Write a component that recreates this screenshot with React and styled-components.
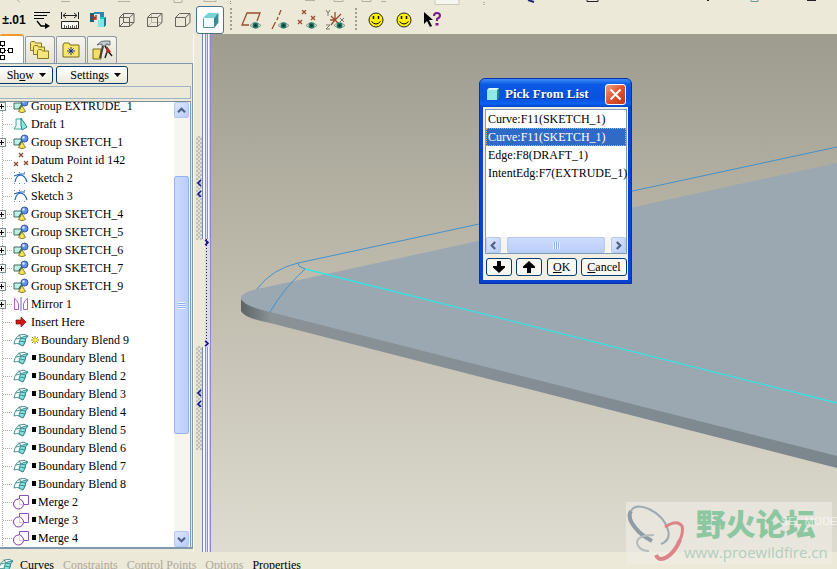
import React, { useState } from 'react'
import styled, { createGlobalStyle } from 'styled-components'

const GlobalStyle = createGlobalStyle`
* {
  box-sizing: border-box;
}
body {
  margin: 0;
  overflow: hidden;
  background: #ece9d8;
  color: #000;
  font-family: "Liberation Serif", "Times New Roman", serif;
  font-size: 12px;
}
button {
  font-family: inherit;
  font-size: inherit;
  color: inherit;
  padding: 0;
}
ul {
  list-style: none;
  margin: 0;
  padding: 0;
}
svg {
  display: block;
  flex: none;
}
`

const Container = styled.div`
display: flex;
flex-direction: column;
height: 100vh;
position: relative;
`

/* ---------- toolbars ---------- */
const CutBar = styled.div`
height: 6px;
flex: none;
overflow: hidden;
`
const Toolbar = styled.div`
display: flex;
align-items: center;
height: 28px;
flex: none;
`
const ToolButton = styled.button`
width: 28px;
height: 28px;
flex: none;
display: flex;
align-items: center;
justify-content: center;
border-radius: 3px;
border: 1px solid ${props => props.$active ? '#4d7389' : 'transparent'};
background: ${props => props.$active ? '#fff' : 'transparent'};
`
const Precision = styled.span`
font-family: "Liberation Sans", Arial, sans-serif;
font-size: 12px;
font-weight: bold;
`
const Separator = styled.div`
width: 2px;
height: 24px;
margin: 0 5px 0 6px;
background: repeating-linear-gradient(#a19e90 0 2px, transparent 2px 4px);
`

/* ---------- main area ---------- */
const Main = styled.div`
flex: 1;
display: flex;
min-height: 0;
`
const Left = styled.div`
width: 193px;
flex: none;
display: flex;
flex-direction: column;
padding-bottom: 3px;
`
const Tabs = styled.div`
display: flex;
align-items: flex-end;
gap: 1px;
height: 29px;
`
const Tab = styled.button`
width: ${props => props.$active ? 24 : 30}px;
height: ${props => props.$active ? 29 : 27}px;
display: flex;
align-items: center;
justify-content: ${props => props.$active ? 'flex-start' : 'center'};
border: 1px solid #8c9ba6;
border-bottom: none;
border-left-width: ${props => props.$active ? 0 : 1}px;
border-top: ${props => props.$active ? '2px solid #f09a2c' : '1px solid #8c9ba6'};
border-radius: 2px 3px 0 0;
background: ${props => props.$active ? '#fff' : 'linear-gradient(#f6f5ef, #e6e3d2)'};
`
const Panel = styled.div`
flex: 1;
min-height: 0;
display: flex;
flex-direction: column;
border: solid #8098ac;
border-width: 1px 1px 2px 0;
`
const MenuButtons = styled.div`
display: flex;
gap: 3px;
padding: 2px 0;
`
const MenuButton = styled.button`
width: ${props => props.$w}px;
height: 18px;
margin-left: ${props => props.$cut ? '-4px' : 0};
display: flex;
align-items: center;
justify-content: flex-end;
gap: 5px;
padding-right: 6px;
border: 1px solid #003c74;
border-radius: 3px;
background: linear-gradient(#fff, #ece9d8);
`
const TreeHead = styled.div`
height: 13px;
flex: none;
margin: 0 1px 2px 0;
border: 1px solid #9eb3c4;
border-left: none;
`
const TreeBox = styled.div`
flex: 1;
min-height: 0;
display: flex;
border-top: 1px solid #7f8c95;
border-right: 1px solid #7f9db9;
margin-right: 1px;
background: #fff;
`
const TreeClip = styled.div`
flex: 1;
overflow: hidden;
`
const Tree = styled.ul`
margin-top: -5px;
background: repeating-linear-gradient(#a9a9a0 0 1px, transparent 1px 2px) 2px 0 / 1px 100% no-repeat;
`
const TreeRow = styled.li`
display: flex;
align-items: center;
height: 18px;
line-height: 18px;
white-space: nowrap;
cursor: default;
`
const Branch = styled.span`
width: 13px;
height: 18px;
flex: none;
display: flex;
align-items: center;
background: repeating-linear-gradient(90deg, #a9a9a0 0 1px, transparent 1px 2px) 3px 9px / 10px 1px no-repeat;
`
const Plus = styled.button`
width: 6px;
height: 9px;
border: 1px solid #7c9296;
border-left: none;
background: linear-gradient(#000, #000) 0 3px / 4px 1px no-repeat, linear-gradient(#000, #000) 1px 1px / 1px 5px no-repeat, #f3f2ec;
`
const IconBox = styled.span`
width: 18px;
flex: none;
`
const Bullet = styled.i`
width: 4px;
height: 5px;
margin: 0 2px 2px 1px;
background: #000;
`
const Star = styled.span`
width: 10px;
`

const VScroll = styled.div`
width: 16px;
flex: none;
display: flex;
flex-direction: column;
background: #f6f5ef;
`
const ScrollButton = styled.button`
width: 15px;
height: 16px;
flex: none;
display: flex;
align-items: center;
justify-content: center;
border: 1px solid #b4c8f0;
border-radius: 2px;
background: linear-gradient(135deg, #dce6fe, #b9cdf8);
`
const Gap = styled.span`
flex: ${props => props.$grow};
`
const VThumb = styled.div`
flex: 257;
width: 15px;
display: flex;
align-items: center;
justify-content: center;
border: 1px solid #98b2ea;
border-radius: 2px;
background: linear-gradient(90deg, #cbdafd, #bccdfa);
`
const Grip = styled.span`
width: 7px;
height: 7px;
background: repeating-linear-gradient(${props => props.$vertical ? '90deg' : '180deg'}, #eef4fe 0 1px, #8fb0f2 1px 2px);
`

/* ---------- sashes between the tree and the model ---------- */
const Sash = styled.div`
width: 9px;
flex: none;
display: flex;
flex-direction: column;
align-items: flex-end;
padding-top: 102px;
gap: 106px;
border-left: 1px solid #f8f7f0;
`
const SashGrip = styled.button`
width: 6px;
height: 104px;
border: none;
display: flex;
align-items: center;
justify-content: center;
background: repeating-conic-gradient(#c2c0b4 0 25%, #e4e1d3 0 50%) 0 0 / 4px 4px;
`
const Edge = styled.div`
width: 9px;
flex: none;
display: flex;
flex-direction: column;
border-right: 1px solid #8a88c8;
`
const EdgeRail = styled.div`
flex: ${props => props.$grow};
border-left: 1px solid #7486c8;
background: linear-gradient(90deg, #fafafd 0 2px, #7f92d2 2px 3px, #dde2f4 3px 4px, #7f92d2 4px 5px, #fafafd 5px 6px, #cfcfe8 6px 7px);
`
const EdgeHandle = styled.button`
flex: 108;
border: none;
display: flex;
flex-direction: column;
align-items: flex-end;
justify-content: space-between;
background: repeating-linear-gradient(#20204c 0 1px, transparent 1px 3px) 4px 0 / 1px 100% no-repeat, linear-gradient(90deg, #ece9d8 0 3px, #dcdce6 3px);
`

/* ---------- model view ---------- */
const Viewport = styled.div`
flex: 1;
min-width: 0;
position: relative;
overflow: hidden;
background: linear-gradient(#9e9c8e, #c0bdaf 50%, #dedbd0);
`
const Scene = styled.svg`
width: 100%;
height: 100%;
`

const Dialog = styled.section`
position: absolute;
left: 268px;
top: 44px;
width: 153px;
display: flex;
flex-direction: column;
border-radius: 6px 6px 0 0;
background: #0a43d2;
border: 1px solid #0831a8;
padding: 0 3px 3px;
`
const TitleBar = styled.header`
display: flex;
align-items: center;
height: 28px;
margin: 0 -3px;
padding: 2px 5px 0 7px;
gap: 6px;
border-radius: 5px 5px 0 0;
background: linear-gradient(#3d8cf8, #0a58e4 20%, #0753dd 70%, #0a62f2 88%, #0446c6);
`
const Title = styled.h1`
flex: 1;
margin: 0;
font-size: 13px;
font-weight: bold;
white-space: nowrap;
color: #fff;
text-shadow: 1px 1px #0a2a80;
`
const Close = styled.button`
width: 21px;
height: 21px;
display: flex;
align-items: center;
justify-content: center;
border: 1px solid #fff;
border-radius: 3px;
background: linear-gradient(135deg, #f0a084, #df5230 50%, #c03a18);
`
const DialogBody = styled.div`
background: #f1efe4;
padding: 2px 1px 4px 2px;
`
const ListFrame = styled.div`
border: 1px solid #7f9db9;
background: #fff;
`
const List = styled.ul`
height: 127px;
`
const Option = styled.li`
height: 18px;
line-height: 16px;
padding-left: 1px;
white-space: nowrap;
cursor: default;
border: 1px ${props => props.$selected ? 'dotted #d8a860' : 'solid transparent'};
background: ${props => props.$selected ? '#316ac5' : 'transparent'};
color: ${props => props.$selected ? '#fff' : '#000'};
`
const HScroll = styled.div`
display: flex;
justify-content: space-between;
height: 16px;
background: #f6f5ef;
`
const HThumb = styled.div`
width: 98px;
display: flex;
align-items: center;
justify-content: center;
border: 1px solid #b4c8f0;
border-radius: 2px;
background: linear-gradient(#cddbfe, #bacdfa);
`
const Actions = styled.div`
display: flex;
justify-content: space-between;
padding: 4px 0 0 1px;
`
const Action = styled.button`
width: ${props => props.$w}px;
height: 18px;
display: flex;
align-items: center;
justify-content: center;
border: 1px solid #003c74;
border-radius: 3px;
background: #f8f7f2;
`

/* ---------- dashboard tabs ---------- */
const Dashboard = styled.nav`
display: flex;
align-items: flex-start;
height: 17px;
flex: none;
overflow: hidden;
gap: 9px;
padding-top: 5px;
`
const DashTab = styled.button`
border: none;
background: none;
line-height: 16px;
white-space: nowrap;
&:disabled {
  color: #aca899;
}
`
const FeatureIcon = styled.span`
width: 11px;
`

const Watermark = styled.div`
position: absolute;
right: 5px;
bottom: 5px;
width: 206px;
height: 62px;
display: flex;
background: rgba(240, 238, 230, 0.6);
`
const WatermarkText = styled.div`
display: flex;
flex-direction: column;
align-items: center;
`
const SiteName = styled.span`
font-family: "Noto Sans CJK SC", sans-serif;
font-size: 30px;
font-weight: 900;
line-height: 40px;
color: #8dc7a2;
`
const SiteLink = styled.a`
font-family: "Open Sans", "Noto Sans", sans-serif;
font-size: 15px;
line-height: 20px;
color: #b2cdbf;
text-decoration: none;
`
const Mode = styled.span`
position: absolute;
left: 155px;
top: 13px;
font-family: "Liberation Sans", Arial, sans-serif;
font-size: 11px;
white-space: nowrap;
color: rgba(255, 255, 255, 0.65);
`

/* ---------- icons ---------- */
const Chevron = ({ dir, color = '#4d6185', small }) => {
  const turn = { up: 0, right: 90, down: 180, left: 270 }[dir]
  const size = small ? 7 : 9
  return (
    <svg width={size} height={size} viewBox="0 0 9 9">
      <path d="M1 6.2 4.5 2.7 8 6.2" fill="none" stroke={color} strokeWidth="2.2" transform={`rotate(${turn} 4.5 4.5)`} />
    </svg>
  )
}

const Triangle = () => (
  <svg width="7" height="4" viewBox="0 0 7 4"><path d="M0 0h7L3.5 4z" /></svg>
)

const LeaderIcon = () => (
  <svg width="18" height="18" viewBox="0 0 18 18" fill="none" stroke="#000">
    <path d="M1 1.5h16M1 4.5h13M1 7.5h10" />
    <path d="M4 10l4 5h5" strokeWidth="1.3" />
    <path d="M12 12l5 3-5 3z" fill="#000" stroke="none" />
  </svg>
)

const DimensionIcon = () => (
  <svg width="18" height="18" viewBox="0 0 18 18" fill="none" stroke="#222">
    <path d="M.5 1v7M17.5 1v7M2 4.5h14M5 2 2 4.5 5 7M13 2l3 2.5L13 7" />
    <path d="M.5 10.5h17v7H.5z" fill="#f8f8f0" />
    <path d="M3.5 14v3M5.5 15v2M7.5 14v3M9.5 15v2M11.5 14v3M13.5 15v2M15.5 14v3" stroke="#555" />
  </svg>
)

const RegenIcon = () => (
  <svg width="18" height="18" viewBox="0 0 18 18">
    <path d="M1 2h4v9H1z" fill="#245e78" />
    <path d="M5 1h10v6H5z" fill="#2f86ae" />
    <path d="M9 8l2-2h6v8l-2 2H9z" fill="#2cc0c4" />
    <path d="M9 8h6v8H9z" fill="#7fe6e4" />
    <path d="M15 8l2-2v8l-2 2z" fill="#168088" />
    <path d="M5 3h6v6H5z" fill="#d8ecec" />
    <path d="M3 4l4 4M7 4v4H3" stroke="#c02a1a" strokeWidth="1.4" fill="none" />
  </svg>
)

const CubeIcon = ({ kind }) => {
  const hidden = kind === 'wire' ? '#66645c' : '#b9b6a8'
  return (
    <svg width="17" height="16" viewBox="0 0 17 16" fill="none" stroke="#66645c">
      {kind !== 'solid' && <path d="M5.500 1.500v9h10.500M5.500 10.500l-4 4" stroke={hidden} />}
      <path d="M1.500 5.500h10v9h-10zM1.500 5.500l4-4h10.500v9l-4.500 4M11.500 5.500l4.500-4" />
    </svg>
  )
}

const ShadedCube = ({ size = 17 }) => (
  <svg width={size} height={size} viewBox="0 0 17 17">
    <path d="M12 6l4-5v10l-4 5z" fill="#2f8f92" />
    <path d="M1 6l5-5h10l-4 5z" fill="#79d2d2" />
    <path d="M1 6h11v10H1z" fill="#eefafa" />
    <path d="M1.5 6.5V15.500H12l4-5V1.500" fill="none" stroke="#5b8f94" />
  </svg>
)

const TitleCube = () => (
  <svg width="12" height="12" viewBox="0 0 12 12">
    <path d="M0 2l2-2h10v10l-2 2H0z" fill="#1d8a96" />
    <path d="M0 2h10v10H0z" fill="#8fe6e6" />
    <path d="M0 2l2-2h10l-2 2z" fill="#d4fafa" />
  </svg>
)

const Eye = () => (
  <g stroke="none">
    <path d="M9 15.5q5-6 11 0q-5 5-11 0z" fill="#dfe8dc" stroke="#5c7a70" strokeWidth=".7" />
    <circle cx="14.5" cy="15.5" r="3" fill="#1e7766" />
    <circle cx="14.5" cy="15.5" r="1.3" fill="#0b2e2c" />
  </g>
)

const cross = (x, y) => `M${x} ${y}l4 4m0-4l-4 4`

const DatumIcon = ({ kind }) => (
  <svg width="20" height="20" viewBox="0 0 20 20" fill="none" stroke="#9a4e2c" strokeWidth="1.3">
    {kind === 'plane' && <path d="M8 15H1L6 3h13l-3 8" />}
    {kind === 'axis' && <path d="M12 0l-2 5M9 7 8 10M6.5 12 3 19" />}
    {kind === 'points' && <path d={cross(5, 0) + cross(1, 10) + cross(14, 6)} />}
    {kind === 'csys' && (
      <>
        <path d="M10 10V2M10 10l6-6M10 10H5M10 10l-4 5M6 6l8 8" />
        <path d="M1 0l2 3 2-3M3 3v3M15 8l4 4M19 8l-4 4M1 15h4l-4 4h4" stroke="#77786f" strokeWidth="1" />
      </>
    )}
    <Eye />
  </svg>
)

const Smiley = () => (
  <svg width="16" height="16" viewBox="0 0 16 16">
    <circle cx="8" cy="8" r="7" fill="#fff200" stroke="#222" />
    <path d="M5.5 4v3M10.5 4v3" stroke="#000" strokeWidth="1.5" />
    <path d="M3.5 9.5q4.5 5 9 0" fill="none" stroke="#000" />
  </svg>
)

const HelpIcon = () => (
  <svg width="18" height="18" viewBox="0 0 18 18">
    <path d="M1 1v12l3-3 3 6 2-1-3-6h4z" />
    <path d="M11 5q0-3 3-3t3 2.5q0 2-3 3.5v2" fill="none" stroke="#7b1d84" strokeWidth="2" />
    <path d="M12.5 12h3v2.5h-3z" fill="#7b1d84" />
  </svg>
)

const TreeTabIcon = () => (
  <svg width="14" height="20" viewBox="0 0 14 20" fill="none" stroke="#000" shapeRendering="crispEdges">
    <path d="M.5 1.5h4v4h-4zM.5 8.5h4v4h-4zM8.5 8.5h4v4h-4zM.5 15.5h4v4h-4zM5 10.5h1m1 0h1M2.5 6v1M2.5 13v1" />
  </svg>
)

const folderPath = 'M.5 10.5v-8l1-1h3l1 1.5h6v7.5z'

const FoldersIcon = () => (
  <svg width="20" height="20" viewBox="0 0 20 20" fill="#f6e67a" stroke="#7a6c1c" strokeWidth=".9">
    <path d={folderPath} />
    <path d={folderPath} transform="translate(3 4)" />
    <path d={folderPath} transform="translate(7 8)" />
  </svg>
)

const FavoritesIcon = () => (
  <svg width="18" height="18" viewBox="0 0 18 18">
    <path d="M1 16V4l1-2h5l1 2h9v12z" fill="#f8e66a" stroke="#7a6c1c" />
    <path d="M9 6v8M5 10h8M6.5 7.5l5 5M11.5 7.5l-5 5" stroke="#16309a" />
  </svg>
)

const ToolsIcon = () => (
  <svg width="21" height="20" viewBox="0 0 21 20">
    <path d="M1 19V9h8v10z" fill="#f6de66" stroke="#7a6c1c" />
    <path d="M5 5q4-5 9-4h4v4h-2v-1h-2v2h-4V4q-2 0-5 1z" fill="#c3cdd2" stroke="#4a545a" strokeWidth=".8" />
    <path d="M11 6l-3 12" stroke="#444" strokeWidth="2.2" />
    <path d="M13 6l3 5 4 5M16 9l-3 9" stroke="#222" strokeWidth="1.5" fill="none" />
    <path d="M15 6l4 6-5 1z" fill="#c22a22" />
  </svg>
)

const SurfaceArt = () => (
  <g stroke="#3c8286" strokeWidth=".9">
    <path d="M1 12q1-7 6-9 4-2 8 1-3 2-3 6l-2 4-4-2q-2-1-5 0z" fill="#f2fffd" />
    <path d="M8 6q2-2 7-2-3 2-3 6l-2 4-4-2q0-4 2-6z" fill="#7fe2e0" />
    <path d="M3 7q4-2 10 0M8 6 6 2.500M7 9l5 1" fill="none" />
  </g>
)

const TreeIcon = ({ kind }) => (
  <svg width="16" height="16" viewBox="0 0 16 16">
    {kind === 'group' && (
      <>
        <path d="M1 5h8v6H1z" fill="#bff0e4" stroke="#45685e" />
        <path d="M9 5v6L5 11z" fill="#3c7466" />
        <circle cx="11.5" cy="4.5" r="3.5" fill="#5f93e2" stroke="#1e3c8c" strokeWidth=".8" />
        <circle cx="10.5" cy="3.5" r="1.2" fill="#e2eeff" />
        <path d="M9 7.5 5.5 13.5q3.5 2.500 7 0z" fill="#f4e252" stroke="#6c6420" strokeWidth=".8" />
      </>
    )}
    {kind === 'draft' && (
      <>
        <path d="M3 3h5l1 2v8H1l2-3z" fill="#eafcfa" stroke="#3aa7a4" />
        <path d="M8 2l6 9-5 3-1-5z" fill="#8fe6e0" stroke="#258884" />
      </>
    )}
    {kind === 'points' && <path d={cross(6, 1) + cross(1, 10) + cross(11, 9)} fill="none" stroke="#8a4a30" strokeWidth="1.3" />}
    {kind === 'sketch' && (
      <>
        <path d="M1 2.5h14M1 13.5h14" stroke="#5a86c8" strokeDasharray="1 4" />
        <path d="M2 12q1-6 5-7 5 0 7 7M1 6l6-2h5" fill="none" stroke="#2463b4" strokeWidth="1.2" />
      </>
    )}
    {kind === 'mirror' && (
      <>
        <path d="M1.5 2.5v11h4V8q-1-4-4-5.500zM14.5 2.5v11h-4V8q1-4 4-5.500z" fill="none" stroke="#b45cc8" />
        <path d="M8 1v14" stroke="#6a70a4" />
      </>
    )}
    {kind === 'insert' && <path d="M3 6h5V3l5 5-5 5v-3H3z" fill="#d01812" stroke="#7c0c08" strokeWidth=".7" />}
    {kind === 'blend' && <SurfaceArt />}
    {kind === 'merge' && (
      <g fill="none" stroke="#7a35a6">
        <path d="M6.5 1.5h9v9h-9z" stroke="#8f4fc0" />
        <circle cx="5.5" cy="10" r="5" />
        <path d="M6.5 5v5.5h4" stroke="#e4cdf0" />
      </g>
    )}
  </svg>
)

const NewStar = () => (
  <svg width="8" height="8" viewBox="0 0 8 8">
    <path d="M4 0v8M0 4h8M1 1l6 6M7 1 1 7" stroke="#8d8208" />
    <circle cx="4" cy="4" r="2" fill="#ffee22" />
  </svg>
)

const BigArrow = ({ up }) => (
  <svg width="12" height="12" viewBox="0 0 12 12">
    <path d="M4 0h4v5h4v1.500L6 12 0 6.500V5h4z" transform={up ? 'rotate(180 6 6)' : undefined} />
  </svg>
)

// bottoms of the icons of the bar scrolled off above
const CutIcons = () => (
  <svg width="837" height="6" viewBox="0 0 837 6" fill="none" stroke="#b4b1a2">
    <path d="M17 0l3 2M61 1.500h9M118 1.500h12M174 0v2.500h8V0M204 0v1.500h12V0M305 .500h10M334 0v1.500h9V0M362 0v1.500h9V0M381 1.500h5" />
    <path d="M435 0v4.500h24V0" fill="#f6f5ef" stroke="#cbc8ba" />
    <path d="M528 0l6 2" stroke="#1c2c7c" strokeWidth="2" />
    <path d="M587 0v1.500h11V0M707 .500h2M807 .500h9" stroke="#222" />
    <path d="M751 0v1.500h7V0" stroke="#6f9a9c" />
    <path d="M230.500 1v4M484 2v3" stroke="#8d8a7c" strokeDasharray="1 1" />
  </svg>
)

const ModelView = () => (
  <Scene viewBox="211 34 626 518" preserveAspectRatio="xMinYMin slice">
    <defs>
      <linearGradient id="side" x1="0" x2="1">
        <stop offset="0" stopColor="#5d6366" />
        <stop offset=".05" stopColor="#8a9296" />
        <stop offset=".4" stopColor="#858f95" />
        <stop offset="1" stopColor="#7b868d" />
      </linearGradient>
    </defs>
    <path d="M241 298V311Q244 318 270 323L837 468V440L420 300z" fill="url(#side)" />
    <path d="M837 163 262 288Q240 292 241 299 244 306 270 312L837 456z" fill="#9ba8b1" />
    <g fill="none">
      <path d="M257 289Q272 269 298 263L837 147" stroke="#4391cd" />
      <path d="M298 263l1 3 6 3Q284 288 270 312" stroke="#4391cd" />
      <path d="M305 269 837 403" stroke="#35e3e3" strokeWidth="1.3" />
    </g>
  </Scene>
)

const WatermarkLogo = () => (
  <svg width="58" height="62" viewBox="0 0 58 62" fill="none">
    <path d="M35 42Q45 38 42 28 38 14 23 7 9 1 5 9" stroke="#9caab2" strokeWidth="2" />
    <path d="M5 9Q0 17 13 30 18 35 26 39" stroke="#8d9ca6" strokeWidth="4" />
    <path d="M28 33Q11 33 11 41 13 49 23 49" stroke="#b4bcbc" strokeWidth="2" />
    <path d="M39 25Q51 17 56 24 58 31 52 42" stroke="#dc8588" strokeWidth="3" />
    <path d="M54 38Q49 50 41 55 33 60 30 53" stroke="#dc8588" strokeWidth="4" />
  </svg>
)

/* ---------- data ---------- */
const features = [
  { icon: 'group', name: 'Group EXTRUDE_1' },
  { icon: 'draft', name: 'Draft 1' },
  { icon: 'group', name: 'Group SKETCH_1' },
  { icon: 'points', name: 'Datum Point id 142' },
  { icon: 'sketch', name: 'Sketch 2' },
  { icon: 'sketch', name: 'Sketch 3' },
  { icon: 'group', name: 'Group SKETCH_4' },
  { icon: 'group', name: 'Group SKETCH_5' },
  { icon: 'group', name: 'Group SKETCH_6' },
  { icon: 'group', name: 'Group SKETCH_7' },
  { icon: 'group', name: 'Group SKETCH_9' },
  { icon: 'mirror', name: 'Mirror 1' },
  { icon: 'insert', name: 'Insert Here' },
  { icon: 'blend', name: 'Boundary Blend 9', fresh: true },
  ...[1, 2, 3, 4, 5, 6, 7, 8].map(n => ({ icon: 'blend', name: `Boundary Blend ${n}`, bullet: true })),
  ...[2, 3, 4].map(n => ({ icon: 'merge', name: `Merge ${n}`, bullet: true })),
]

const picks = ['Curve:F11(SKETCH_1)', 'Curve:F11(SKETCH_1)', 'Edge:F8(DRAFT_1)', 'IntentEdg:F7(EXTRUDE_1)']

const TopToolbar = () => (
  <Toolbar>
    <ToolButton aria-label="Precision"><Precision>±.01</Precision></ToolButton>
    <ToolButton aria-label="Notes"><LeaderIcon /></ToolButton>
    <ToolButton aria-label="Dimensions"><DimensionIcon /></ToolButton>
    <ToolButton aria-label="Regenerate"><RegenIcon /></ToolButton>
    <ToolButton aria-label="Wireframe"><CubeIcon kind="wire" /></ToolButton>
    <ToolButton aria-label="Hidden line"><CubeIcon kind="hidden" /></ToolButton>
    <ToolButton aria-label="No hidden"><CubeIcon kind="solid" /></ToolButton>
    <ToolButton aria-label="Shading" $active><ShadedCube /></ToolButton>
    <Separator />
    <ToolButton aria-label="Datum planes"><DatumIcon kind="plane" /></ToolButton>
    <ToolButton aria-label="Datum axes"><DatumIcon kind="axis" /></ToolButton>
    <ToolButton aria-label="Datum points"><DatumIcon kind="points" /></ToolButton>
    <ToolButton aria-label="Coordinate systems"><DatumIcon kind="csys" /></ToolButton>
    <Separator />
    <ToolButton aria-label="Smile"><Smiley /></ToolButton>
    <ToolButton aria-label="Smile again"><Smiley /></ToolButton>
    <ToolButton aria-label="Context help"><HelpIcon /></ToolButton>
  </Toolbar>
)

const ModelTree = () => (
  <Left>
    <Tabs>
      <Tab aria-label="Model tree" $active><TreeTabIcon /></Tab>
      <Tab aria-label="Folders"><FoldersIcon /></Tab>
      <Tab aria-label="Favorites"><FavoritesIcon /></Tab>
      <Tab aria-label="Connections"><ToolsIcon /></Tab>
    </Tabs>
    <Panel>
      <MenuButtons>
        <MenuButton $w={57} $cut><span>Sh<u>o</u>w</span><Triangle /></MenuButton>
        <MenuButton $w={72}><span>Settin<u>g</u>s</span><Triangle /></MenuButton>
      </MenuButtons>
      <TreeHead />
      <TreeBox>
        <TreeClip>
          <Tree role="tree">
            {features.map(f => (
              <TreeRow key={f.name} role="treeitem">
                <Branch>{(f.icon === 'group' || f.icon === 'mirror') && <Plus aria-label={`Expand ${f.name}`} />}</Branch>
                <IconBox><TreeIcon kind={f.icon} /></IconBox>
                {f.bullet && <Bullet />}
                {f.fresh && <Star><NewStar /></Star>}
                {f.name}
              </TreeRow>
            ))}
          </Tree>
        </TreeClip>
        <VScroll>
          <ScrollButton aria-label="Scroll up"><Chevron dir="up" /></ScrollButton>
          <Gap $grow={58} />
          <VThumb><Grip /></VThumb>
          <Gap $grow={97} />
          <ScrollButton aria-label="Scroll down"><Chevron dir="down" /></ScrollButton>
        </VScroll>
      </TreeBox>
    </Panel>
  </Left>
)

const Chevrons = () => (
  <svg width="6" height="18" viewBox="0 0 6 18" fill="none" stroke="#14149a" strokeWidth="1.6">
    <path d="M5 1 2 4l3 3M5 12l-3 3 3 3" />
  </svg>
)

const PickDialog = () => {
  const [selected, setSelected] = useState(1)
  const move = step => setSelected(s => Math.min(picks.length - 1, Math.max(0, s + step)))

  return (
    <Dialog role="dialog" aria-labelledby="pick-title">
      <TitleBar>
        <TitleCube />
        <Title id="pick-title">Pick From List</Title>
        <Close aria-label="Close">
          <svg width="13" height="13" viewBox="0 0 13 13"><path d="M1.5 1.5l10 10M11.5 1.5l-10 10" stroke="#fff" strokeWidth="2" /></svg>
        </Close>
      </TitleBar>
      <DialogBody>
        <ListFrame>
          <List role="listbox" aria-labelledby="pick-title">
            {picks.map((name, i) => (
              <Option key={i} role="option" aria-selected={i === selected} $selected={i === selected} onClick={() => setSelected(i)}>
                {name}
              </Option>
            ))}
          </List>
          <HScroll>
            <ScrollButton aria-label="Scroll left"><Chevron dir="left" /></ScrollButton>
            <HThumb><Grip $vertical /></HThumb>
            <ScrollButton aria-label="Scroll right"><Chevron dir="right" /></ScrollButton>
          </HScroll>
        </ListFrame>
        <Actions>
          <Action $w={26} aria-label="Next" onClick={() => move(1)}><BigArrow /></Action>
          <Action $w={26} aria-label="Previous" onClick={() => move(-1)}><BigArrow up /></Action>
          <Action $w={30}><span><u>O</u>K</span></Action>
          <Action $w={46}><span><u>C</u>ancel</span></Action>
        </Actions>
      </DialogBody>
    </Dialog>
  )
}

const App = () => {
  return (
    <Container>
      <GlobalStyle />
      <CutBar><CutIcons /></CutBar>
      <TopToolbar />
      <Main>
        <ModelTree />
        <Sash>
          <SashGrip aria-label="Collapse tree"><Chevrons /></SashGrip>
          <SashGrip aria-label="Collapse browser"><Chevrons /></SashGrip>
        </Sash>
        <Edge>
          <EdgeRail $grow={205} />
          <EdgeHandle aria-label="Open browser">
            <Chevron dir="right" color="#14149a" small />
            <Chevron dir="right" color="#14149a" small />
          </EdgeHandle>
          <EdgeRail $grow={205} />
        </Edge>
        <Viewport>
          <ModelView />
          <PickDialog />
        </Viewport>
      </Main>
      <Dashboard>
        <FeatureIcon><svg width="15" height="16" viewBox="2 0 15 16"><SurfaceArt /></svg></FeatureIcon>
        <DashTab>Curves</DashTab>
        <DashTab disabled>Constraints</DashTab>
        <DashTab disabled>Control Points</DashTab>
        <DashTab disabled>Options</DashTab>
        <DashTab>Properties</DashTab>
      </Dashboard>
      <Watermark>
        <WatermarkLogo />
        <WatermarkText>
          <SiteName>野火论坛</SiteName>
          <SiteLink href="#">www.proewildfire.cn</SiteLink>
        </WatermarkText>
        <Mode>SEL MODE</Mode>
      </Watermark>
    </Container>
  )
}

export default App
